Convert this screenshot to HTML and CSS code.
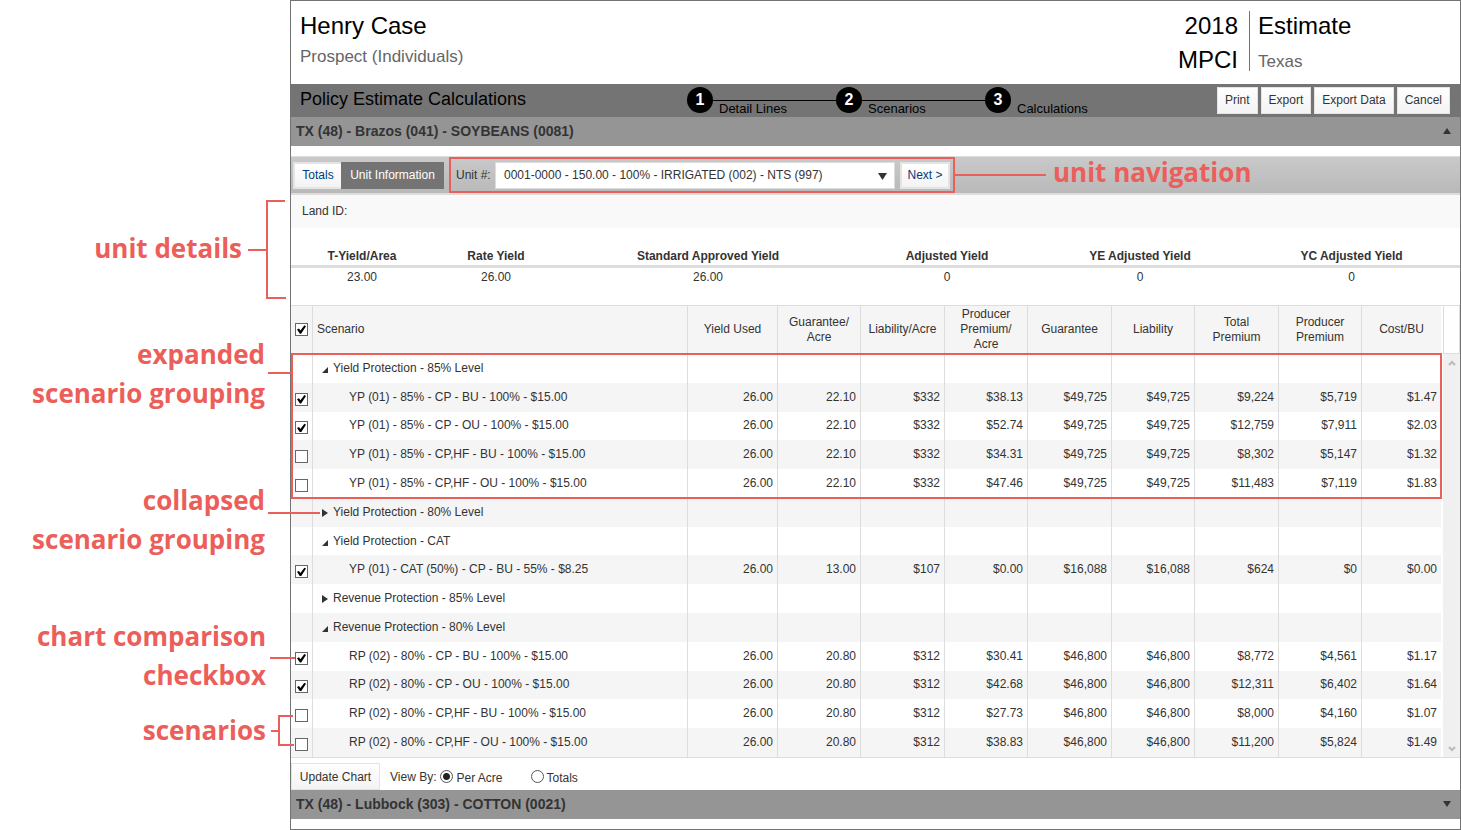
FILE: index.html
```html
<!DOCTYPE html>
<html lang="en">
<head>
<meta charset="utf-8">
<title>Policy Estimate Calculations</title>
<link rel="stylesheet" href="styles.css">
</head>
<body>
<div class="figure">
  <aside class="notes">
    <p class="note note-details">unit details</p>
    <p class="note note-expanded">expanded<br>scenario grouping</p>
    <p class="note note-collapsed">collapsed<br>scenario grouping</p>
    <p class="note note-checkbox">chart comparison<br>checkbox</p>
    <p class="note note-scenarios">scenarios</p>
  </aside>
  <main class="panel">
    <header class="client">
      <div class="client-name">
        <h1>Henry Case</h1>
        <p class="muted">Prospect (Individuals)</p>
      </div>
      <div class="plan"><p>2018</p><p>MPCI</p></div>
      <div class="kind"><p>Estimate</p><p class="muted">Texas</p></div>
    </header>
    <div class="titlebar">
      <h2>Policy Estimate Calculations</h2>
      <ol class="steps">
        <li><b>1</b><span>Detail Lines</span></li>
        <li><b>2</b><span>Scenarios</span></li>
        <li><b>3</b><span>Calculations</span></li>
      </ol>
      <div class="actions">
        <button type="button">Print</button>
        <button type="button">Export</button>
        <button type="button">Export Data</button>
        <button type="button">Cancel</button>
      </div>
    </div>
    <h3 class="county">TX (48) - Brazos (041) - SOYBEANS (0081)<svg width="8" height="6" viewBox="0 0 8 6"><path d="M0 6L4 0L8 6Z" fill="#333"/></svg></h3>
    <div class="toolbar">
      <div class="tabs">
        <button type="button">Totals</button><button type="button" class="active">Unit Information</button>
      </div>
      <div class="unit-nav">
        <label for="unit">Unit #:</label>
        <span class="select">
          <select id="unit"><option>0001-0000 - 150.00 - 100% - IRRIGATED (002) - NTS (997)</option></select>
          <svg width="9" height="7" viewBox="0 0 9 7"><path d="M0 0H9L4.500 7Z" fill="#333"/></svg>
        </span>
        <button type="button">Next &gt;</button>
      </div>
      <span class="nav-line"></span>
      <span class="note-nav">unit navigation</span>
    </div>
    <p class="land">Land ID:</p>
    <table class="yields">
      <colgroup><col class="y1"><col class="y2"><col class="y3"><col class="y4"><col class="y5"><col class="y6"></colgroup>
      <thead><tr><th>T-Yield/Area</th><th>Rate Yield</th><th>Standard Approved Yield</th><th>Adjusted Yield</th><th>YE Adjusted Yield</th><th>YC Adjusted Yield</th></tr></thead>
      <tbody><tr><td>23.00</td><td>26.00</td><td>26.00</td><td>0</td><td>0</td><td>0</td></tr></tbody>
    </table>
    <div class="grid">
      <table class="scenarios">
        <colgroup><col class="c-check"><col><col class="c-yield"><col class="c-odd"><col class="c-even"><col class="c-odd"><col class="c-even"><col class="c-odd"><col class="c-even"><col class="c-odd"><col class="c-cost"></colgroup>
        <thead><tr><th><input type="checkbox" aria-label="All scenarios" checked></th><th class="left">Scenario</th><th>Yield Used</th><th>Guarantee/<br>Acre</th><th>Liability/Acre</th><th>Producer<br>Premium/<br>Acre</th><th>Guarantee</th><th>Liability</th><th>Total<br>Premium</th><th>Producer<br>Premium</th><th>Cost/BU</th></tr></thead>
        <tbody>
          <tr class="group"><td></td><td><svg width="6" height="6" viewBox="0 0 6 6"><path d="M6 0V6H0Z" fill="#333"/></svg>Yield Protection - 85% Level</td><td></td><td></td><td></td><td></td><td></td><td></td><td></td><td></td><td></td></tr>
          <tr><td><input type="checkbox" aria-labelledby="s1" checked></td><td id="s1">YP (01) - 85% - CP - BU - 100% - $15.00</td><td>26.00</td><td>22.10</td><td>$332</td><td>$38.13</td><td>$49,725</td><td>$49,725</td><td>$9,224</td><td>$5,719</td><td>$1.47</td></tr>
          <tr><td><input type="checkbox" aria-labelledby="s2" checked></td><td id="s2">YP (01) - 85% - CP - OU - 100% - $15.00</td><td>26.00</td><td>22.10</td><td>$332</td><td>$52.74</td><td>$49,725</td><td>$49,725</td><td>$12,759</td><td>$7,911</td><td>$2.03</td></tr>
          <tr><td><input type="checkbox" aria-labelledby="s3"></td><td id="s3">YP (01) - 85% - CP,HF - BU - 100% - $15.00</td><td>26.00</td><td>22.10</td><td>$332</td><td>$34.31</td><td>$49,725</td><td>$49,725</td><td>$8,302</td><td>$5,147</td><td>$1.32</td></tr>
          <tr><td><input type="checkbox" aria-labelledby="s4"></td><td id="s4">YP (01) - 85% - CP,HF - OU - 100% - $15.00</td><td>26.00</td><td>22.10</td><td>$332</td><td>$47.46</td><td>$49,725</td><td>$49,725</td><td>$11,483</td><td>$7,119</td><td>$1.83</td></tr>
          <tr class="group"><td></td><td><svg width="6" height="8" viewBox="0 0 6 8"><path d="M0 0L6 4L0 8Z" fill="#333"/></svg>Yield Protection - 80% Level</td><td></td><td></td><td></td><td></td><td></td><td></td><td></td><td></td><td></td></tr>
          <tr class="group"><td></td><td><svg width="6" height="6" viewBox="0 0 6 6"><path d="M6 0V6H0Z" fill="#333"/></svg>Yield Protection - CAT</td><td></td><td></td><td></td><td></td><td></td><td></td><td></td><td></td><td></td></tr>
          <tr><td><input type="checkbox" aria-labelledby="s5" checked></td><td id="s5">YP (01) - CAT (50%) - CP - BU - 55% - $8.25</td><td>26.00</td><td>13.00</td><td>$107</td><td>$0.00</td><td>$16,088</td><td>$16,088</td><td>$624</td><td>$0</td><td>$0.00</td></tr>
          <tr class="group"><td></td><td><svg width="6" height="8" viewBox="0 0 6 8"><path d="M0 0L6 4L0 8Z" fill="#333"/></svg>Revenue Protection - 85% Level</td><td></td><td></td><td></td><td></td><td></td><td></td><td></td><td></td><td></td></tr>
          <tr class="group"><td></td><td><svg width="6" height="6" viewBox="0 0 6 6"><path d="M6 0V6H0Z" fill="#333"/></svg>Revenue Protection - 80% Level</td><td></td><td></td><td></td><td></td><td></td><td></td><td></td><td></td><td></td></tr>
          <tr><td><input type="checkbox" aria-labelledby="s6" checked></td><td id="s6">RP (02) - 80% - CP - BU - 100% - $15.00</td><td>26.00</td><td>20.80</td><td>$312</td><td>$30.41</td><td>$46,800</td><td>$46,800</td><td>$8,772</td><td>$4,561</td><td>$1.17</td></tr>
          <tr><td><input type="checkbox" aria-labelledby="s7" checked></td><td id="s7">RP (02) - 80% - CP - OU - 100% - $15.00</td><td>26.00</td><td>20.80</td><td>$312</td><td>$42.68</td><td>$46,800</td><td>$46,800</td><td>$12,311</td><td>$6,402</td><td>$1.64</td></tr>
          <tr><td><input type="checkbox" aria-labelledby="s8"></td><td id="s8">RP (02) - 80% - CP,HF - BU - 100% - $15.00</td><td>26.00</td><td>20.80</td><td>$312</td><td>$27.73</td><td>$46,800</td><td>$46,800</td><td>$8,000</td><td>$4,160</td><td>$1.07</td></tr>
          <tr><td><input type="checkbox" aria-labelledby="s9"></td><td id="s9">RP (02) - 80% - CP,HF - OU - 100% - $15.00</td><td>26.00</td><td>20.80</td><td>$312</td><td>$38.83</td><td>$46,800</td><td>$46,800</td><td>$11,200</td><td>$5,824</td><td>$1.49</td></tr>
        </tbody>
      </table>
      <div class="scroll">
        <div class="scroll-head"></div>
        <div class="track">
          <svg width="8" height="6" viewBox="0 0 8 6"><path d="M1 5L4 2L7 5" fill="none" stroke="#bbb" stroke-width="2"/></svg>
          <svg width="8" height="6" viewBox="0 0 8 6"><path d="M1 1L4 4L7 1" fill="none" stroke="#bbb" stroke-width="2"/></svg>
        </div>
      </div>
      <div class="group-outline"></div>
    </div>
    <div class="chart-bar">
      <button type="button">Update Chart</button>
      <span class="view-by">View By:</span>
      <label class="per-acre"><input type="radio" name="view" checked><span>Per Acre</span></label>
      <label><input type="radio" name="view"><span>Totals</span></label>
    </div>
    <h3 class="county">TX (48) - Lubbock (303) - COTTON (0021)<svg width="8" height="6" viewBox="0 0 8 6"><path d="M0 0H8L4 6Z" fill="#333"/></svg></h3>
  </main>
  <svg class="leaders" width="330" height="830" viewBox="0 0 330 830" fill="none" stroke="#ec5e5a" stroke-width="2">
    <path d="M285 201H267V298H286M248 250H267M268 373H291M268 513H320M270 658H295M293 716H279V745H294M271 731H279"/>
  </svg>
</div>
</body>
</html>
```
FILE: styles.css
```css
* { box-sizing: border-box; }
body { margin: 0; background: #fff; color: #333; font: 12px/16px "Liberation Sans", Arial, sans-serif; }
h1, h2, h3, p, ol { margin: 0; padding: 0; font-weight: normal; }
button, select { font: inherit; color: #333; }
button { border: 2px solid #e4e4e4; background: linear-gradient(#fff, #f3f3f3); padding: 0 6px; height: 27px; }

.figure { position: relative; display: flex; }
.notes { position: relative; width: 290px; flex: none; }
.note, .note-nav { color: #ec5e5a; font: 700 26px/39px "Open Sans", "Noto Sans", sans-serif; white-space: nowrap; }
.note { position: absolute; right: 25px; text-align: right; }
.note-details { top: 229px; right: 48px; }
.note-expanded { top: 335px; }
.note-collapsed { top: 481px; }
.note-checkbox { top: 617px; right: 24px; }
.note-scenarios { top: 711px; right: 24px; }
.leaders { position: absolute; left: 0; top: 0; pointer-events: none; }

.panel { flex: 1; min-width: 0; border: 1px solid #737373; padding-bottom: 10px; }
.client { display: flex; height: 83px; padding: 8px 0 0 9px; color: #000; font-size: 24px; line-height: 34px; }
.client h1 { font-size: 24px; line-height: 34px; }
.client-name { flex: 1; }
.client .muted { color: #666; font-size: 17px; }
.client-name .muted { line-height: 27px; }
.plan { text-align: right; padding-right: 11px; }
.kind { position: relative; width: 211px; padding-left: 9px; }
.kind::before { content: ""; position: absolute; left: 0; top: 2px; height: 60px; border-left: 1px solid #737373; }
.kind .muted { line-height: 37px; }

.titlebar { display: flex; height: 33px; background: #747474; color: #000; padding-right: 10px; }
.titlebar h2 { width: 396px; padding-left: 9px; font-size: 18px; line-height: 30px; }
.steps { display: flex; flex: 1; list-style: none; padding-top: 3px; }
.steps li { position: relative; display: flex; gap: 6px; width: 149px; }
.steps li:not(:last-child)::after { content: ""; position: absolute; left: 26px; right: 0; top: 13px; border-top: 1px solid #000; }
.steps b { width: 26px; height: 26px; border-radius: 50%; background: #000; color: #fff; font-size: 16px; line-height: 26px; text-align: center; }
.steps span { font-size: 13px; line-height: 16px; padding-top: 14px; white-space: nowrap; }
.actions { display: flex; gap: 3px; padding-top: 3px; }
.actions button { border-width: 1px; padding: 0 7px 1px; white-space: nowrap; }

.county { display: flex; align-items: center; justify-content: space-between; height: 29px; padding: 0 9px 1px 5px; background: #959595; font-size: 14px; font-weight: bold; }
.toolbar { display: flex; align-items: center; height: 39px; margin-top: 10px; padding-left: 2px; border-top: 1px solid #ddd; border-bottom: 2px solid #ddd; background: linear-gradient(#c9c9c9, #b9b9b9); }
.tabs { display: flex; margin-right: 5px; }
.tabs button { width: 48px; padding: 0; border-right: 0; color: #003c7d; }
.tabs .active { width: 103px; border: 0; background: #747474; color: #fff; }
.unit-nav { display: flex; align-items: center; height: 36px; width: 506px; padding: 0 3px 0 5px; border: 2px solid #ec5e5a; }
.unit-nav label { width: 39px; }
.select { position: relative; flex: 1; }
.select select { display: block; appearance: none; width: 100%; height: 27px; padding: 0 8px; border: 1px solid #ddd; border-radius: 0; background: #fff; }
.select svg { position: absolute; right: 8px; top: 11px; pointer-events: none; }
.unit-nav button { width: 50px; margin-left: 5px; color: #003c7d; white-space: nowrap; padding: 0; }
.nav-line { width: 91px; border-top: 2px solid #ec5e5a; }
.note-nav { margin-left: 7px; line-height: 32px; padding-bottom: 6px; }
.land { height: 33px; padding: 0 11px; line-height: 32px; background: #f9f9f9; }

table { border-collapse: separate; border-spacing: 0; table-layout: fixed; width: 100%; }
td, th { padding: 0; }
.yields { text-align: center; margin-bottom: 19px; }
.yields th { height: 40px; padding-bottom: 1px; vertical-align: bottom; border-bottom: 3px solid #ddd; }
.yields td { height: 18px; }
.y1 { width: 142px; } .y2 { width: 126px; } .y3 { width: 298px; } .y4 { width: 180px; } .y5 { width: 206px; }

.grid { position: relative; display: flex; border-top: 1px solid #ddd; border-bottom: 1px solid #ddd; }
.scenarios { flex: 1; width: auto; height: 451px; }
.c-check { width: 22px; } .c-yield { width: 90px; } .c-odd { width: 83px; } .c-even { width: 84px; } .c-cost { width: 79px; }
.scenarios thead tr { height: 48px; }
.scenarios th { font-weight: normal; line-height: 15px; background: #f5f5f5; border-right: 1px solid #ddd; padding-bottom: 1px; }
.scenarios .left { text-align: left; padding-left: 4px; }
.scenarios td { text-align: right; padding: 0 4px 1px 0; border-right: 1px solid #ddd; }
.scenarios td:nth-child(2) { text-align: left; padding-left: 36px; }
.scenarios .group td:nth-child(2) { padding-left: 9px; }
.scenarios td:last-child, .scenarios th:last-child { border-right: 0; }
.scenarios tbody tr:nth-child(even) { background: #f5f5f5; }
.scenarios td:first-child { padding: 4px 4px 0; }
.scenarios th:first-child { padding: 0 4px 1px; }
.group svg { margin-right: 5px; vertical-align: -1px; }

input[type="checkbox"] { appearance: none; display: block; width: 13px; height: 13px; margin: 0; border: 1px solid #666; background: #fff; position: relative; }
input[type="checkbox"]:checked::after { content: ""; position: absolute; inset: 1px; background: #000; clip-path: polygon(0 50%, 22% 40%, 38% 62%, 82% 4%, 100% 14%, 46% 98%, 32% 98%); }

.scroll { display: flex; flex-direction: column; width: 17px; margin-left: 2px; }
.scroll-head { height: 48px; border: 1px solid #ddd; border-top: 0; }
.track { flex: 1; display: flex; flex-direction: column; justify-content: space-between; align-items: center; padding: 6px 0 5px; background: #f0f0f0; }
.group-outline { position: absolute; left: 0; right: 18px; top: 47px; height: 146px; border: 2px solid #ec5e5a; pointer-events: none; }

.chart-bar { display: flex; align-items: center; height: 32px; padding-top: 5px; }
.chart-bar button { border-width: 1px; width: 89px; padding: 0 6px; margin-right: 10px; white-space: nowrap; }
.view-by { margin-right: 4px; }
.chart-bar label { display: flex; align-items: center; gap: 3px; }
.chart-bar label span { padding-top: 3px; }
.per-acre { margin-right: 28px; }
input[type="radio"] { appearance: none; width: 13px; height: 13px; margin: 0; border: 1px solid #555; border-radius: 50%; background: #fff; }
input[type="radio"]:checked { background: radial-gradient(circle, #222 0 3px, #fff 4px); }
```
